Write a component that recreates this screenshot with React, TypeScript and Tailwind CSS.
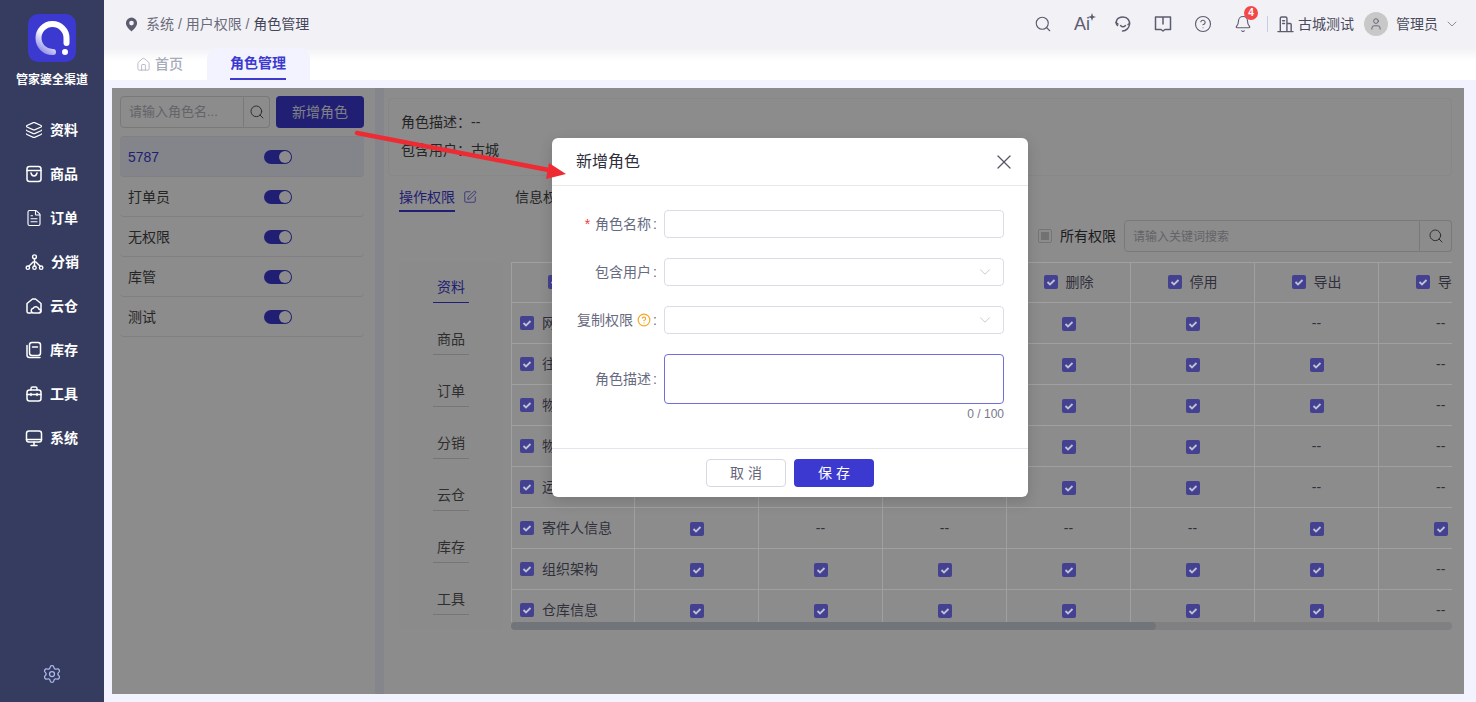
import React from "react";
import { Search, Layers, ChevronDown, X, CircleHelp, Bell, User, Home, Settings, FileText, SquarePen } from "lucide-react";

const FONT = "[font-family:'Liberation_Sans','Noto_Sans_CJK_SC',sans-serif]";

function Logo() {
  return (
    <div className="w-12 h-12 rounded-[10px] bg-[#3c39d1]">
      <svg viewBox="0 0 48 48" className="w-12 h-12">
        <defs>
          <linearGradient id="lg" x1="0.1" y1="1" x2="0.7" y2="0.2">
            <stop offset="0" stopColor="#8f8de8" />
            <stop offset="0.6" stopColor="#ffffff" />
          </linearGradient>
        </defs>
        <path d="M25 38 A14 14 0 1 1 38.5 24 V29" fill="none" stroke="url(#lg)" strokeWidth="6" strokeLinecap="round" />
        <circle cx="37" cy="38" r="3" fill="#fff" />
      </svg>
    </div>
  );
}

const S = { fill: "none", stroke: "currentColor", strokeWidth: 1.5, strokeLinecap: "round" as const, strokeLinejoin: "round" as const };

function BagIcon() {
  return <svg viewBox="0 0 18 18" className="w-[18px] h-[18px]" {...S}><rect x="2" y="1.5" width="14" height="15" rx="2.5" /><path d="M2 5.5h14M6 8c.5 2 1.5 3 3 3s2.500-1 3-3" /></svg>;
}
function CloudHouseIcon() {
  return <svg viewBox="0 0 18 18" className="w-[18px] h-[18px]" {...S}><path d="M6 16H3.500A1.500 1.500 0 0 1 2 14.500V6.500L7.500 2h3L16 6.500v8a1.500 1.500 0 0 1-1 1.400" /><path d="M8 16h5.500a2 2 0 0 0 .3-4 3 3 0 0 0-5.600-.7A2.400 2.400 0 0 0 8 16z" /></svg>;
}
function StockIcon() {
  return <svg viewBox="0 0 18 18" className="w-[18px] h-[18px]" {...S}><rect x="4.500" y="1.500" width="11" height="13" rx="2.500" /><path d="M7.500 6h5M2 4.500V14a2.500 2.500 0 0 0 2.500 2.500H15" /></svg>;
}
function ToolboxIcon() {
  return <svg viewBox="0 0 18 18" className="w-[18px] h-[18px]" {...S}><rect x="2" y="5" width="14" height="11" rx="2.500" /><path d="M6 5V3.500A1.500 1.500 0 0 1 7.500 2h3A1.500 1.500 0 0 1 12 3.500V5M2 9.500h14M6 8.500v2M12 8.500v2" /></svg>;
}
function MonitorIcon() {
  return <svg viewBox="0 0 18 18" className="w-[18px] h-[18px]" {...S}><rect x="1.500" y="2" width="15" height="11" rx="2.500" /><path d="M1.500 10.500h15M9 13v3M6 16.500h6" /></svg>;
}
function TreeIcon() {
  return <svg viewBox="0 0 20 18" className="w-[19px] h-[18px]" {...S}><circle cx="10" cy="3.500" r="2" /><circle cx="3" cy="15" r="1.800" /><circle cx="10" cy="15" r="1.800" /><circle cx="17" cy="15" r="1.800" /><path d="M10 5.500v7.700M4 13.500L8.500 9h3l4.500 4.500" /></svg>;
}
function PinIcon() {
  return <svg viewBox="0 0 14 16" className="w-[13px] h-[15px]"><path fillRule="evenodd" d="M7 0.500a6 6 0 0 1 6 6c0 3.500-3.500 7-6 9-2.500-2-6-5.500-6-9a6 6 0 0 1 6-6zm0 3.500a2.500 2.500 0 1 0 0 5 2.500 2.500 0 0 0 0-5z" fill="#5c5c70" /></svg>;
}
function HeadsetIcon() {
  return <svg viewBox="0 0 18 18" className="w-[18px] h-[18px]" {...S}><path d="M3.500 10.500C1 8 2 2 9 2c5 0 7 4 6.500 7.500-.4 3-3 6.500-7 6.500" /><path d="M2 7.500l2 1.500M6.500 10.500c1.500 1.500 3.500 1.500 5 0M15.500 8.500l-1.500 1" /></svg>;
}
function BookIcon() {
  return <svg viewBox="0 0 18 18" className="w-[18px] h-[18px]" {...S}><path d="M1.500 2h15v12.500h-5.500L9 16l-2-1.500H1.500zM9 2v7" /></svg>;
}
function BuildingIcon() {
  return <svg viewBox="0 0 18 18" className="w-[17px] h-[17px]" {...S}><path d="M1 16.500h16M3.500 16.500V2.500A1.500 1.500 0 0 1 5 1h4a1.500 1.500 0 0 1 1.500 1.500v14M10.500 8H14a1 1 0 0 1 1 1v7.500M6 5h2M6 8h2" /></svg>;
}
function AiIcon() {
  return (
    <span className="relative flex items-center w-[18px] h-5 text-[#5c5c70]">
      <span className="text-[18px] leading-5">Ai</span>
      <svg viewBox="0 0 8 8" className="absolute right-[-4px] top-[-1px] w-2 h-2"><path d="M4 0l1 3 3 1-3 1-1 3-1-3-3-1 3-1z" fill="currentColor" /></svg>
    </span>
  );
}

const NAV = [
  { t: "资料", i: <Layers className="w-[18px] h-[18px]" strokeWidth={1.5} /> },
  { t: "商品", i: <BagIcon /> },
  { t: "订单", i: <FileText className="w-[18px] h-[18px]" strokeWidth={1.5} /> },
  { t: "分销", i: <TreeIcon /> },
  { t: "云仓", i: <CloudHouseIcon /> },
  { t: "库存", i: <StockIcon /> },
  { t: "工具", i: <ToolboxIcon /> },
  { t: "系统", i: <MonitorIcon /> },
];

function Sidebar() {
  return (
    <aside className="w-[104px] shrink-0 bg-[#353c5f] flex flex-col items-center text-white">
      <div className="mt-3.5"><Logo /></div>
      <div className="mt-2.5 text-xs font-bold leading-4 h-4">管家婆全渠道</div>
      <nav className="mt-5 flex flex-col">
        {NAV.map((n) => (
          <div key={n.t} className="h-11 flex items-center gap-[7px]">
            {n.i}
            <span className="text-sm font-bold">{n.t}</span>
          </div>
        ))}
      </nav>
      <div className="mt-auto mb-[18px] text-[#aebbee]"><Settings className="w-5 h-5" strokeWidth={1.5} /></div>
    </aside>
  );
}

function TopBar() {
  return (
    <header className="h-12 shrink-0 bg-[#f2f2f6] flex items-center pl-[21px] pr-4 text-sm text-[#4a4a5c]">
      <PinIcon />
      <span className="ml-2 text-[#6b6b7c]">系统 / 用户权限 / <span className="text-[#45455a]">角色管理</span></span>
      <div className="ml-auto flex items-center">
        <div className="flex items-center gap-[22px] text-[#5c5c70]">
          <Search className="w-[18px] h-[18px]" strokeWidth={1.5} />
          <AiIcon />
          <HeadsetIcon />
          <BookIcon />
          <CircleHelp className="w-[18px] h-[18px]" strokeWidth={1.5} />
          <span className="relative">
            <Bell className="w-[18px] h-[18px]" strokeWidth={1.5} />
            <span className="absolute -top-[9px] -right-[6px] w-[14px] h-[14px] rounded-full bg-[#f4474a] text-white text-[10px] font-bold leading-[14px] text-center">4</span>
          </span>
        </div>
        <span className="ml-[15px] w-px h-4 bg-[#c5cbe8]" />
        <span className="ml-[9px] text-[#5c5c70]"><BuildingIcon /></span>
        <span className="ml-[4px]">古城测试</span>
        <span className="ml-[10px] w-6 h-6 rounded-full bg-[#c8c8c8] flex items-center justify-center text-[#5c5c70]"><User className="w-3.5 h-3.5" strokeWidth={1.5} /></span>
        <span className="ml-2">管理员</span>
        <ChevronDown className="ml-1.5 w-4 h-4 text-[#77778a]" strokeWidth={1.25} />
      </div>
    </header>
  );
}

function Tabs() {
  return (
    <div className="h-8 shrink-0 bg-gradient-to-b from-[#f2f2f6] to-white to-40% flex pl-[19px] text-sm">
      <div className="w-[84px] flex items-center pl-[13px] gap-1 text-[#a7abbb] font-medium">
        <Home className="w-[15px] h-[15px]" strokeWidth={1.25} />
        首页
      </div>
      <div className="w-[103px] bg-[#f2f3ff] rounded-t-[10px] flex justify-center pr-px">
        <span className="h-8 flex items-center border-b-2 border-[#3c39d1] text-[#3c39d1] font-bold">角色管理</span>
      </div>
    </div>
  );
}

function Toggle() {
  return (
    <span className="w-7 h-3.5 mt-px rounded-full bg-[#3c39d1] flex items-center justify-end pr-px">
      <span className="w-3 h-3 rounded-full bg-white" />
    </span>
  );
}

const ROLES = ["5787", "打单员", "无权限", "库管", "测试"];

function RolePanel() {
  return (
    <section className="w-[263px] shrink-0 bg-white pl-2 pr-[11px] pt-2">
      <div className="flex h-[32px]">
        <div className="w-[124px] h-[32px] border border-[#dcdcdf] rounded-l-[4px] flex items-center pl-2 text-[13px] text-[#b5b5bd]">请输入角色名...</div>
        <div className="w-[26px] h-[32px] border border-l-0 border-[#dcdcdf] rounded-r-[4px] flex items-center justify-center text-[#555]"><Search className="w-4 h-4" strokeWidth={1.5} /></div>
        <div className="ml-1.5 w-[88px] h-[32px] rounded-[4px] bg-[#3c39d1] text-[#e8e8f5] text-sm flex items-center justify-center">新增角色</div>
      </div>
      <ul className="mt-2">
        {ROLES.map((r, i) => (
          <li key={r} className={`flex items-center pl-2 pr-[72px] justify-between border-b border-[#e9e9ee] rounded-[4px] text-sm ${i === 0 ? "h-[41px] bg-[#f0f3fb] text-[#3c39d1] border-t" : "h-10 text-[#444]"}`}>
            <span>{r}</span>
            <Toggle />
          </li>
        ))}
      </ul>
    </section>
  );
}

function Check({ className = "" }: { className?: string }) {
  return (
    <span className={`inline-flex w-3.5 h-3.5 rounded-[2px] bg-[#434190] items-center justify-center align-middle ${className}`}>
      <svg viewBox="0 0 14 14" className="w-3.5 h-3.5"><path d="M3.500 7l2.500 2.500 4.500-4.500" fill="none" stroke="#bfc0d4" strokeWidth="1.800" /></svg>
    </span>
  );
}

const HEAD = ["查看", "新增", "编辑", "删除", "停用", "导出", "导入"];
const D = (s: string) => s.split("").map((c) => c === "1");
const ROWS: [string, boolean[]][] = [
  ["网店信息", D("1111100")],
  ["往来单位", D("1111110")],
  ["物流公司", D("1111110")],
  ["物流模板", D("1111100")],
  ["运费模板", D("1111100")],
  ["寄件人信息", D("1000011")],
  ["组织架构", D("1111110")],
  ["仓库信息", D("1111110")],
];
const CATS = ["资料", "商品", "订单", "分销", "云仓", "库存", "工具"];

function PermTable() {
  return (
    <div className="relative z-20 flex-1 min-w-0 h-[368px] overflow-hidden ml-2">
      <div className="h-[360px] overflow-hidden">
        <table className="table-fixed border-collapse w-[991px] text-sm text-[#30303c]">
          <colgroup>
            <col className="w-[123px]" />
            {HEAD.map((h) => <col key={h} className="w-[124px]" />)}
          </colgroup>
          <thead>
            <tr className="h-10 border-y border-[#a0a0a0]">
              <th className="border-l border-[#a0a0a0] font-normal text-center"><span className="inline-flex items-center gap-2"><Check />名称</span></th>
              {HEAD.map((h) => (
                <th key={h} className="border-l border-[#a0a0a0] font-normal text-center"><span className="inline-flex items-center gap-2"><Check />{h}</span></th>
              ))}
            </tr>
          </thead>
          <tbody>
            {ROWS.map(([n, v]) => (
              <tr key={n} className="h-[41px] border-b border-[#a0a0a0]">
                <td className="border-l border-[#a0a0a0] pl-2"><span className="flex items-center gap-2"><Check />{n}</span></td>
                {v.map((on, i) => (
                  <td key={i} className="border-l border-[#a0a0a0] text-center">{on ? <Check /> : "--"}</td>
                ))}
              </tr>
            ))}
          </tbody>
        </table>
      </div>
      <div className="h-2 rounded-full bg-[#808083]">
        <div className="h-2 w-[645px] rounded-full bg-[#71757a]" />
      </div>
    </div>
  );
}

function DetailPanel() {
  return (
    <section className="flex-1 min-w-0 bg-white ml-[9px] pl-1 pr-3 pt-2.5 pb-2">
      <div className="h-[78px] border border-[#f6f6f8] rounded-[4px] pl-3 pt-[14px] text-sm text-[#444] flex flex-col gap-2.5">
        <div className="h-[18px] leading-[18px]">角色描述：--</div>
        <div className="h-[18px] leading-[18px]">包含用户：古城</div>
      </div>
      <div className="mt-[12px] ml-[11px] flex items-start text-sm text-[#444]">
        <div className="flex items-center gap-2">
          <span className="h-[24px] leading-[18px] border-b-2 border-[#3c39d1] text-[#3c39d1]">操作权限</span>
          <SquarePen className="w-3.5 h-3.5 -mt-1.5 text-[#3c39d1]" strokeWidth={1.25} />
        </div>
        <span className="ml-[38px] leading-[18px]">信息权限</span>
      </div>
      <div className="mt-[8px] flex items-center justify-end h-8 text-sm text-[#333]">
        <span className="w-3.5 h-3.5 border border-[#d5d5d5] rounded-[2px] flex items-center justify-center"><span className="w-2 h-2 bg-[#cfcfcf]" /></span>
        <span className="ml-2">所有权限</span>
        <div className="ml-2 w-[296px] h-8 border border-[#dcdcdf] rounded-l-[4px] flex items-center pl-2 pt-px text-xs text-[#b5b5bd]">请输入关键词搜索</div>
        <div className="w-[32px] h-8 border border-l-0 border-[#dcdcdf] rounded-r-[4px] flex items-center justify-center text-[#555]"><Search className="w-4 h-4" strokeWidth={1.5} /></div>
      </div>
      <div className="mt-2.5 ml-[11px] flex">
        <div className="w-[104px] h-[368px] shrink-0 rounded-t-[4px] bg-[#fdfdfd] flex flex-col items-center gap-[26px] pt-[15px] text-sm text-[#555]">
          {CATS.map((c, i) => (
            <div key={c} className={`w-9 h-[26px] shrink-0 text-center border-b leading-5 ${i === 0 ? "border-[#3c39d1] text-[#3c39d1]" : "border-[#d8d8d8]"}`}>{c}</div>
          ))}
        </div>
        <PermTable />
      </div>
    </section>
  );
}

function Field({ label, required, help, children }: { label: string; required?: boolean; help?: boolean; children: React.ReactNode }) {
  return (
    <div className="flex items-center">
      <div className="w-[105px] shrink-0 text-right text-sm text-[#686a80] flex items-center justify-end">
        {required && <span className="text-[#f0393b] mr-[5px]">*</span>}
        {label}
        {help && <CircleHelp className="ml-1 w-3.5 h-3.5 text-[#f5a623]" strokeWidth={2} />}
        <span className="ml-[2px]">:</span>
      </div>
      <div className="ml-[7px] w-[340px]">{children}</div>
    </div>
  );
}

function SelectBox() {
  return (
    <div className="h-7 border border-[#dcdce6] rounded-[4px] flex items-center justify-end pr-[9px] text-[#bdbdc9]">
      <ChevronDown className="w-[18px] h-[18px]" strokeWidth={1.1} />
    </div>
  );
}

function Modal() {
  return (
    <div className="absolute left-[552px] top-[138px] z-30 w-[476px] h-[359px] bg-white rounded-md flex flex-col shadow-[0_4px_14px_rgba(0,0,0,0.15)]">
      <div className="h-12 shrink-0 border-b border-[#e8e8ec] flex items-center justify-between pl-6 pr-[12px]">
        <span className="text-base text-[#2f2f3e]">新增角色</span>
        <X className="w-6 h-6 text-[#55556a]" strokeWidth={1.3} />
      </div>
      <div className="flex-1 pt-6 flex flex-col gap-5">
        <Field label="角色名称" required><div className="h-7 border border-[#dcdce6] rounded-[4px]" /></Field>
        <Field label="包含用户"><SelectBox /></Field>
        <Field label="复制权限" help><SelectBox /></Field>
        <Field label="角色描述"><div className="h-[50px] border border-[#6f6fd8] rounded-[4px]" /></Field>
        <div className="-mt-[17px] pr-6 text-right text-xs leading-[14px] text-[#77778a]">0 / 100</div>
      </div>
      <div className="h-[49px] shrink-0 border-t border-[#e4e4ea] flex items-center justify-center gap-2 pb-px">
        <div className="w-20 h-7 pl-1 border border-[#d8d8e2] rounded-[4px] flex items-center justify-center text-sm tracking-[4px] text-[#66667a]">取消</div>
        <div className="w-20 h-7 pl-1 rounded-[4px] bg-[#3c39d1] flex items-center justify-center text-sm tracking-[4px] text-white">保存</div>
      </div>
    </div>
  );
}

function Arrow() {
  return (
    <svg className="absolute left-[350px] top-[125px] z-40 w-[220px] h-[60px] pointer-events-none" viewBox="0 0 220 60">
      <path d="M7 8L204 46" stroke="#ee2b33" strokeWidth="4.500" strokeLinecap="round" />
      <path d="M216 49L199 38L196 54Z" fill="#ee2b33" />
    </svg>
  );
}

export default function App() {
  return (
    <div className={`relative w-[1476px] h-[702px] overflow-hidden flex ${FONT}`}>
      <Sidebar />
      <div className="flex-1 min-w-0 flex flex-col bg-[#f2f3ff]">
        <TopBar />
        <Tabs />
        <main className="relative flex-1 min-h-0 mt-2 mb-2 ml-2 mr-3 flex">
          <RolePanel />
          <DetailPanel />
          <div className="absolute inset-0 z-10 bg-black/45" />
        </main>
      </div>
      <Modal />
      <Arrow />
    </div>
  );
}
